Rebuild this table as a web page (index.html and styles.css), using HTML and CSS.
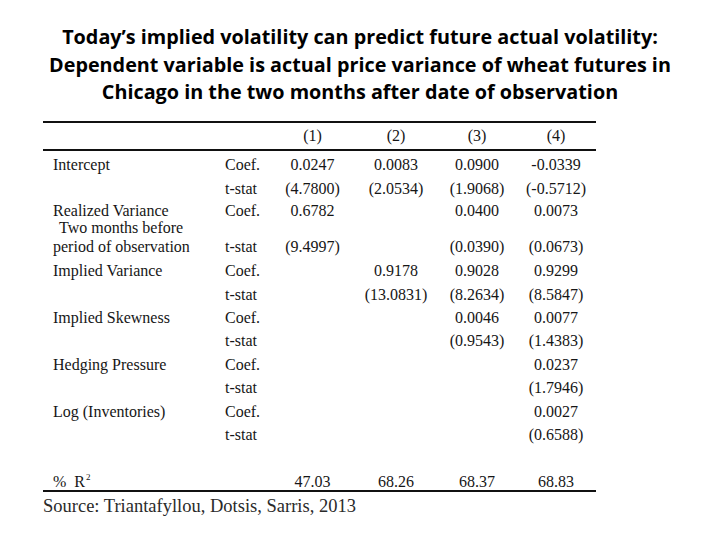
FILE: index.html
```html
<!DOCTYPE html>
<html lang="en">
<head>
<meta charset="utf-8">
<title>Implied volatility regression</title>
<link rel="stylesheet" href="styles.css">
</head>
<body>
<h1 class="title">Today’s implied volatility can predict future actual volatility:<br>Dependent variable is actual price variance of wheat futures in<br>Chicago in the two months after date of observation</h1>
<div class="table">
  <div class="row head">
    <span class="lbl"></span><span class="st"></span>
    <span class="num">(1)</span><span class="num">(2)</span><span class="num">(3)</span><span class="num">(4)</span>
  </div>
  <div class="body">
    <div class="row">
      <span class="lbl">Intercept</span><span class="st">Coef.</span>
      <span class="num">0.0247</span><span class="num">0.0083</span><span class="num">0.0900</span><span class="num">-0.0339</span>
    </div>
    <div class="row">
      <span class="lbl"></span><span class="st">t-stat</span>
      <span class="num">(4.7800)</span><span class="num">(2.0534)</span><span class="num">(1.9068)</span><span class="num">(-0.5712)</span>
    </div>
    <div class="row r-first">
      <span class="lbl">Realized Variance</span><span class="st">Coef.</span>
      <span class="num">0.6782</span><span class="num"></span><span class="num">0.0400</span><span class="num">0.0073</span>
    </div>
    <div class="row r-mid">
      <span class="lbl indent">Two months before</span><span class="st"></span>
      <span class="num"></span><span class="num"></span><span class="num"></span><span class="num"></span>
    </div>
    <div class="row r-last">
      <span class="lbl">period of observation</span><span class="st">t-stat</span>
      <span class="num">(9.4997)</span><span class="num"></span><span class="num">(0.0390)</span><span class="num">(0.0673)</span>
    </div>
    <div class="row">
      <span class="lbl">Implied Variance</span><span class="st">Coef.</span>
      <span class="num"></span><span class="num">0.9178</span><span class="num">0.9028</span><span class="num">0.9299</span>
    </div>
    <div class="row">
      <span class="lbl"></span><span class="st">t-stat</span>
      <span class="num"></span><span class="num">(13.0831)</span><span class="num">(8.2634)</span><span class="num">(8.5847)</span>
    </div>
    <div class="row">
      <span class="lbl">Implied Skewness</span><span class="st">Coef.</span>
      <span class="num"></span><span class="num"></span><span class="num">0.0046</span><span class="num">0.0077</span>
    </div>
    <div class="row">
      <span class="lbl"></span><span class="st">t-stat</span>
      <span class="num"></span><span class="num"></span><span class="num">(0.9543)</span><span class="num">(1.4383)</span>
    </div>
    <div class="row">
      <span class="lbl">Hedging Pressure</span><span class="st">Coef.</span>
      <span class="num"></span><span class="num"></span><span class="num"></span><span class="num">0.0237</span>
    </div>
    <div class="row">
      <span class="lbl"></span><span class="st">t-stat</span>
      <span class="num"></span><span class="num"></span><span class="num"></span><span class="num">(1.7946)</span>
    </div>
    <div class="row">
      <span class="lbl">Log (Inventories)</span><span class="st">Coef.</span>
      <span class="num"></span><span class="num"></span><span class="num"></span><span class="num">0.0027</span>
    </div>
    <div class="row">
      <span class="lbl"></span><span class="st">t-stat</span>
      <span class="num"></span><span class="num"></span><span class="num"></span><span class="num">(0.6588)</span>
    </div>
  </div>
  <div class="row foot">
    <span class="lbl">%&nbsp; R<sup>2</sup></span><span class="st"></span>
    <span class="num">47.03</span><span class="num">68.26</span><span class="num">68.37</span><span class="num">68.83</span>
  </div>
</div>
<p class="source">Source: Triantafyllou, Dotsis, Sarris, 2013</p>
</body>
</html>
```
FILE: styles.css
```css
html, body {
  margin: 0;
  padding: 0;
  background: #ffffff;
}

body {
  width: 720px;
  height: 540px;
  overflow: hidden;
}

.title {
  margin: 0;
  padding-top: 23px;
  font-family: "Open Sans", Lato, sans-serif;
  font-weight: 700;
  font-size: 19.8px;
  line-height: 27.7px;
  text-align: center;
  color: #000000;
}

.table {
  margin: 15px 0 0 43px;
  width: 553px;
  border-top: 2px solid #111111;
  border-bottom: 2px solid #111111;
  font-family: "Liberation Serif", "Times New Roman", serif;
  font-size: 16px;
  color: #161616;
}

.row {
  display: grid;
  grid-template-columns: 175px 53px 83px 84px 78px 80px;
  line-height: 23.4px;
  height: 23.4px;
}

.row > span {
  white-space: nowrap;
}

.head {
  height: 26px;
  line-height: 26px;
  border-bottom: 2px solid #111111;
}

.body {
  padding-top: 2px;
}

.lbl {
  padding-left: 10px;
}

.indent {
  padding-left: 16px;
}

.st {
  padding-left: 7px;
}

.num {
  text-align: center;
}

.r-first {
  height: 22px;
  line-height: 22px;
}

.r-mid {
  height: 12.4px;
  line-height: 12.4px;
}

.r-last {
  height: 25px;
  line-height: 25px;
}

.foot {
  margin-top: 28px;
  height: 16px;
  line-height: 16px;
}

.foot sup {
  font-size: 9px;
  line-height: 0;
  vertical-align: 7px;
  margin-left: 1px;
}

.source {
  margin: 3px 0 0 43px;
  font-family: "Liberation Serif", "Times New Roman", serif;
  font-size: 18.5px;
  line-height: 22px;
  color: #2a2a2a;
}
```
